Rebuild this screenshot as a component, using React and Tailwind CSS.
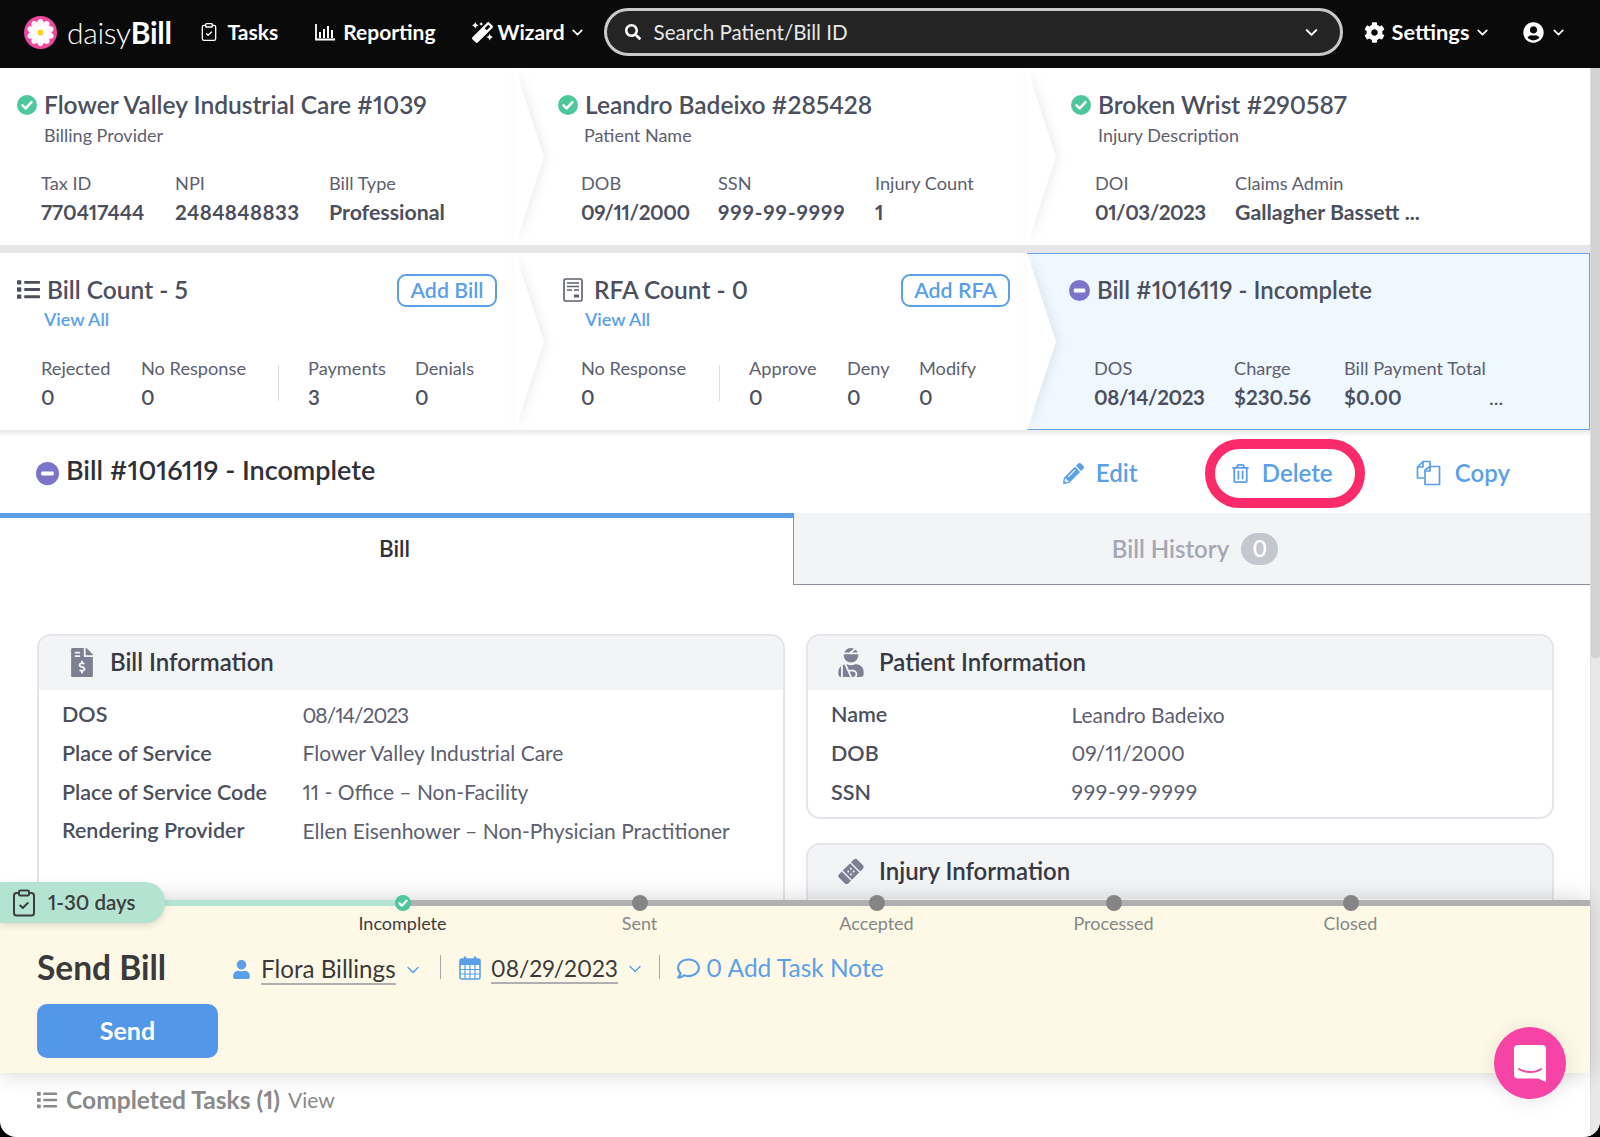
import React from "react";
import { FaCog, FaUserCircle, FaList, FaPencilAlt, FaUser, FaMagic, FaFileInvoiceDollar, FaUserInjured, FaBandAid, FaRegTrashAlt, FaRegComment, FaSearch } from "react-icons/fa";
import { ClipboardCheck, ChevronDown } from "lucide-react";

function CheckDot({ size = 20 }) {
  return (
    <svg width={size} height={size} viewBox="0 0 20 20" className="shrink-0">
      <circle cx="10" cy="10" r="10" fill="#4fc79d" />
      <path d="M5.5 10.3l3.1 3.1 5.9-6.2" fill="none" stroke="#fff" strokeWidth="2.6" strokeLinecap="round" strokeLinejoin="round" />
    </svg>
  );
}
function MinusDot({ size = 21 }) {
  return (
    <svg width={size} height={size} viewBox="0 0 20 20" className="shrink-0">
      <circle cx="10" cy="10" r="10" fill="#7b74c9" />
      <rect x="4.5" y="8.2" width="11" height="3.6" rx="1.2" fill="#fff" />
    </svg>
  );
}
function Flower() {
  const petals = [0, 36, 72, 108, 144, 180, 216, 252, 288, 324];
  return (
    <svg width="33" height="33" viewBox="0 0 33 33" className="shrink-0">
      <circle cx="16.5" cy="16.5" r="16.5" fill="#f0479f" />
      {petals.map((a) => (
        <ellipse key={a} cx="16.5" cy="8.6" rx="3.6" ry="5.8" fill="#fff" fillOpacity="0.95" transform={`rotate(${a} 16.5 16.5)`} />
      ))}
      <circle cx="16.5" cy="16.5" r="3" fill="#ffd21f" />
    </svg>
  );
}
function Bars() {
  return (
    <svg width="20" height="17" viewBox="0 0 20 17" className="shrink-0">
      <path d="M1 0v15.5h19" fill="none" stroke="#fff" strokeWidth="1.8" />
      <path d="M5 8v6M9 5v9M13 2v12M17 6v8" stroke="#fff" strokeWidth="2" />
    </svg>
  );
}
function RfaIcon() {
  return (
    <svg width="20" height="24" viewBox="0 0 20 24" className="shrink-0">
      <rect x="1" y="1" width="18" height="22" rx="1.5" fill="none" stroke="#5c5f6c" strokeWidth="1.6" />
      <path d="M4 5h12M4 8.5h12M4 12h5M11 12h5" stroke="#5c5f6c" strokeWidth="1.5" />
      <path d="M11 18h5" stroke="#5c5f6c" strokeWidth="3" />
    </svg>
  );
}
function CopyIcon() {
  return (
    <svg width="25" height="26" viewBox="0 0 25 26" fill="none" stroke="#5a9fe8" strokeWidth="1.7" strokeLinejoin="round" className="shrink-0">
      <path d="M8 18H1.5V7L7 1.5h7V8" />
      <path d="M7 1.5V7H1.5" />
      <path d="M9 24.5V10l5-3.5h9.5v18z" />
      <path d="M14 6.5V11H9" />
    </svg>
  );
}
function CalendarIcon() {
  return (
    <svg width="22" height="24" viewBox="0 0 22 24" className="shrink-0">
      <rect x="1" y="3" width="20" height="20" rx="2" fill="#fff" stroke="#5a9fe8" strokeWidth="1.6" />
      <rect x="1" y="3" width="20" height="6" fill="#5a9fe8" />
      <path d="M6 0.5v5M16 0.5v5" stroke="#5a9fe8" strokeWidth="2.4" />
      <path d="M1 13.5h20M1 18h20M6 9v14M11 9v14M16 9v14" stroke="#5a9fe8" strokeWidth="1.2" />
    </svg>
  );
}
function Stat({ label, value, w, bold = false, vc = "text-[20.5px]" }) {
  return (
    <div className={w}>
      <div className="text-[18.2px] leading-[22px] text-[#5d6070] whitespace-nowrap">{label}</div>
      <div className={`mt-[6px] leading-[24px] text-[#4c4f5e] whitespace-nowrap ${vc} ${bold ? "font-bold" : "font-semibold"}`}>{value}</div>
    </div>
  );
}
function Arrow() {
  return (
    <svg viewBox="0 0 29 177" preserveAspectRatio="none" className="absolute left-full top-0 z-10 h-full w-[29px] drop-shadow-[3px_0_5px_rgba(0,0,0,0.07)]">
      <polygon points="0,0 29,88.5 0,177" fill="#fff" />
    </svg>
  );
}
function Cell({ w, children, arrow, z, active }) {
  return (
    <div className={`relative ${w} ${z} ${active ? "bg-[#eff7ff] border border-[#6aa7ea] border-l-0" : "bg-white"}`}>
      {children}
      {arrow && <Arrow />}
    </div>
  );
}
function TitleLine({ icon, title, pl, gap = "gap-[7px]", size = "text-[24.5px]" }) {
  return (
    <div className={`flex items-center ${gap} ${pl}`}>
      {icon}
      <span className={`${size} leading-[30px] font-semibold text-[#4c4f5e] whitespace-nowrap`}>{title}</span>
    </div>
  );
}
function Card({ icon, title, rows, h, mt = "" }) {
  return (
    <div className={`${h} ${mt} rounded-[14px] border-2 border-[#e4e5ec] bg-white overflow-hidden`}>
      <div className="h-[54px] bg-[#f3f4f6] flex items-center pl-[30px] gap-[15px] pb-[2px]">
        <span className="w-[26px] flex justify-center text-[#7d8092] text-[29px]">{icon}</span>
        <span className="text-[24px] font-semibold text-[#363944]">{title}</span>
      </div>
      <div className="pt-[5px] pl-[23px]">
        {rows.map(([k, v, c = ""]) => (
          <div key={k} className="flex h-[38.7px] items-center">
            <span className="w-[240.5px] text-[21.5px] font-semibold text-[#4c4f5e]">{k}</span>
            <span className={`text-[21px] text-[#5d6070] ${c}`}>{v}</span>
          </div>
        ))}
      </div>
    </div>
  );
}
function Step({ name, done }) {
  return (
    <div className="w-[237px] flex flex-col items-center">
      {done ? <CheckDot size={16} /> : <div className="h-4 w-4 rounded-full bg-[#858585]" />}
      <div className={`mt-[1px] text-[18px] leading-[22px] ${done ? "text-[#3d3d3d]" : "text-[#868686]"}`}>{name}</div>
    </div>
  );
}
const AddBtn = ({ children, w }) => (
  <span className={`${w} mt-[2px] h-[33px] flex items-center justify-center rounded-[9px] border-2 border-[#5a9fe8] text-[21.3px] font-semibold text-[#5a9fe8] bg-white whitespace-nowrap`}>{children}</span>
);

export default function App() {
  return (
    <div className="w-[1600px] h-[1137px] bg-black font-[Lato,sans-serif] proportional-nums">
      <div className="relative w-full h-full bg-white rounded-b-[16px] overflow-hidden flex flex-col">
        <header className="h-[68px] shrink-0 bg-[#0a0a0a] flex items-center text-white font-bold text-[21px] pl-[24px] pb-[4px]">
          <Flower />
          <span className="ml-[10px] text-[30px] font-light tracking-[-0.3px]">daisy<span className="font-bold">Bill</span></span>
          <ClipboardCheck size={20} strokeWidth={1.6} className="ml-[27px]" />
          <span className="ml-[9px]">Tasks</span>
          <span className="ml-[37px]"><Bars /></span>
          <span className="ml-[8px]">Reporting</span>
          <FaMagic size={21} className="ml-[36px]" />
          <span className="ml-[5px]">Wizard</span>
          <ChevronDown size={17} strokeWidth={2.4} className="ml-[4px]" />
          <div className="ml-[18px] w-[739px] h-[48px] rounded-full border-[3px] border-[#c9c9c9] bg-[#242424] flex items-center pl-[18px] pr-[19px] font-normal">
            <FaSearch size={16} />
            <span className="ml-[13px] text-[20.6px] text-[#e8e8e8]">Search Patient/Bill ID</span>
            <ChevronDown size={19} strokeWidth={2.6} className="ml-auto" />
          </div>
          <FaCog size={21} className="ml-[21px]" />
          <span className="ml-[7px] text-[21.8px]">Settings</span>
          <ChevronDown size={17} strokeWidth={2.4} className="ml-[5px]" />
          <FaUserCircle size={21} className="ml-[32px]" />
          <ChevronDown size={17} strokeWidth={2.4} className="ml-[6px]" />
        </header>

        <div className="flex-1 min-h-0 flex">
          <div className="w-[1590px] flex flex-col min-h-0">
            <div className="flex-1 min-h-0 overflow-hidden">
              <div className="flex h-[177px]">
                <Cell w="w-[515px]" z="z-30" arrow>
                  <div className="pt-[22px]"><TitleLine pl="pl-[17px]" icon={<CheckDot />} title="Flower Valley Industrial Care #1039" /></div>
                  <div className="pl-[44px] mt-[4px] text-[18px] leading-[22px] text-[#5d6070]">Billing Provider</div>
                  <div className="flex pl-[41px] mt-[26px]">
                    <Stat w="w-[134px]" label="Tax ID" value="770417444" bold />
                    <Stat w="w-[154px]" label="NPI" value="2484848833" bold vc="text-[20.5px] tracking-[0.4px]" />
                    <Stat w="" label="Bill Type" value="Professional" bold vc="text-[21.3px]" />
                  </div>
                </Cell>
                <Cell w="w-[512px]" z="z-20" arrow>
                  <div className="pt-[22px]"><TitleLine pl="pl-[43px]" icon={<CheckDot />} title="Leandro Badeixo #285428" /></div>
                  <div className="pl-[69px] mt-[4px] text-[18px] leading-[22px] text-[#5d6070]">Patient Name</div>
                  <div className="flex pl-[66px] mt-[26px]">
                    <Stat w="w-[137px]" label="DOB" value="09/11/2000" bold vc="text-[20.5px] tracking-[-0.4px]" />
                    <Stat w="w-[157px]" label="SSN" value="999-99-9999" bold vc="text-[20.5px] tracking-[0.9px]" />
                    <Stat w="" label="Injury Count" value="1" bold />
                  </div>
                </Cell>
                <Cell w="w-[563px]" z="z-10">
                  <div className="pt-[22px]"><TitleLine pl="pl-[44px]" icon={<CheckDot />} title="Broken Wrist #290587" /></div>
                  <div className="pl-[71px] mt-[4px] text-[18px] leading-[22px] text-[#5d6070]">Injury Description</div>
                  <div className="flex pl-[68px] mt-[26px]">
                    <Stat w="w-[140px]" label="DOI" value="01/03/2023" bold vc="text-[20.5px] tracking-[-0.5px]" />
                    <Stat w="" label="Claims Admin" value="Gallagher Bassett ..." bold vc="text-[21.3px]" />
                  </div>
                </Cell>
              </div>
              <div className="h-[8px] bg-[#e6e6e8]" />
              <div className="flex h-[177px]">
                <Cell w="w-[515px]" z="z-30" arrow>
                  <div className="flex items-center pt-[19px] pr-[18px]">
                    <TitleLine pl="pl-[17px]" icon={<FaList size={23} className="text-[#4c4f5e]" />} title="Bill Count - 5" />
                    <span className="ml-auto"><AddBtn w="w-[100px]">Add Bill</AddBtn></span>
                  </div>
                  <div className="pl-[44px] mt-[1px] text-[18px] leading-[22px] font-semibold text-[#5a9fe8]">View All</div>
                  <div className="flex pl-[41px] mt-[27px]">
                    <Stat w="w-[100px]" label="Rejected" value="0" />
                    <Stat w="w-[137px]" label="No Response" value="0" />
                    <div className="h-[36px] mt-[8px] border-l border-[#dcdde2] mr-[29px]" />
                    <Stat w="w-[107px]" label="Payments" value="3" />
                    <Stat w="" label="Denials" value="0" />
                  </div>
                </Cell>
                <Cell w="w-[512px]" z="z-20" arrow>
                  <div className="flex items-center pt-[19px] pr-[17px]">
                    <TitleLine pl="pl-[48px]" gap="gap-[11px]" icon={<RfaIcon />} title="RFA Count - 0" />
                    <span className="ml-auto"><AddBtn w="w-[109px]">Add RFA</AddBtn></span>
                  </div>
                  <div className="pl-[70px] mt-[1px] text-[18px] leading-[22px] font-semibold text-[#5a9fe8]">View All</div>
                  <div className="flex pl-[66px] mt-[27px]">
                    <Stat w="w-[138px]" label="No Response" value="0" />
                    <div className="h-[36px] mt-[8px] border-l border-[#dcdde2] mr-[29px]" />
                    <Stat w="w-[98px]" label="Approve" value="0" />
                    <Stat w="w-[72px]" label="Deny" value="0" />
                    <Stat w="" label="Modify" value="0" />
                  </div>
                </Cell>
                <Cell w="w-[563px]" z="z-10" active>
                  <div className="pt-[21px]"><TitleLine pl="pl-[42px]" size="text-[24px]" icon={<MinusDot />} title="Bill #1016119 - Incomplete" /></div>
                  <div className="flex pl-[67px] mt-[52px]">
                    <Stat w="w-[140px]" label="DOS" value="08/14/2023" bold vc="text-[20.5px] tracking-[-0.4px]" />
                    <Stat w="w-[110px]" label="Charge" value="$230.56" bold />
                    <Stat w="w-[145px]" label="Bill Payment Total" value="$0.00" bold />
                    <span className="self-end text-[20px] leading-[24px] text-[#4c4f5e]">...</span>
                  </div>
                </Cell>
              </div>
              <div className="h-[7px] bg-gradient-to-b from-[#e8e8ea] to-white" />

              <div className="h-[76px] flex items-center pl-[36px] pb-[4px]">
                <MinusDot size={23} />
                <span className="ml-[7px] mb-[6px] text-[27px] font-semibold text-[#2f3139]">Bill #1016119 - Incomplete</span>
                <div className="ml-auto relative h-[69px] flex items-center text-[24px] font-semibold text-[#5a9fe8] pr-[80px]">
                  <FaPencilAlt size={21} />
                  <span className="ml-[12px] w-[85px]">Edit</span>
                  <div className="ml-[24px] w-[160px] h-[69px] rounded-[35px] border-[10px] border-[#fb2a6b] flex items-center pl-[16px]">
                    <FaRegTrashAlt size={19} />
                    <span className="ml-[12px]">Delete</span>
                  </div>
                  <span className="ml-[51px]"><CopyIcon /></span>
                  <span className="ml-[14px]">Copy</span>
                </div>
              </div>

              <div className="flex h-[72px]">
                <div className="w-[793px] border-t-[5px] border-[#5a9fe8] flex items-center justify-center pb-[6px] pr-[4px] text-[22.5px] font-semibold text-[#2f3139]">Bill</div>
                <div className="flex-1 bg-[#f3f4f6] border-l border-b border-[#8b8fa3] flex items-center justify-center gap-[12px] pl-[6px] text-[24px] font-semibold text-[#a5a7b2]">
                  Bill History
                  <span className="w-[37px] h-[32px] rounded-full bg-[#c5c7cf] text-white flex items-center justify-center text-[22px]">0</span>
                </div>
              </div>

              <div className="flex gap-[21px] pl-[37px] pt-[49px]">
                <Card
                  h="w-[748px] h-[400px]"
                  icon={<FaFileInvoiceDollar />}
                  title="Bill Information"
                  rows={[
                    ["DOS", "08/14/2023", "tracking-[-1px]"],
                    ["Place of Service", "Flower Valley Industrial Care"],
                    ["Place of Service Code", "11 - Office – Non-Facility"],
                    ["Rendering Provider", "Ellen Eisenhower – Non-Physician Practitioner"],
                  ]}
                />
                <div className="w-[748px]">
                  <Card
                    h="h-[185px]"
                    icon={<FaUserInjured />}
                    title="Patient Information"
                    rows={[
                      ["Name", "Leandro Badeixo"],
                      ["DOB", "09/11/2000"],
                      ["SSN", "999-99-9999", "tracking-[0.7px]"],
                    ]}
                  />
                  <Card h="h-[200px]" mt="mt-[24px]" icon={<FaBandAid className="-rotate-45" />} title="Injury Information" rows={[]} />
                </div>
              </div>
            </div>

            <div className="relative shrink-0 z-40 shadow-[0_0_22px_rgba(0,0,0,0.18)]">
              <div className="flex h-[6px]">
                <div className="w-[403px] bg-[#b5e3d1]" />
                <div className="flex-1 bg-[#b0b0b0]" />
              </div>
              <div className="absolute left-0 top-[-18px] w-[165px] h-[41px] rounded-r-[20px] bg-[#b5e3d1] flex items-center pl-[9px] gap-[9px] shadow-[0_3px_6px_rgba(0,0,0,0.12)] text-[20.5px] font-semibold text-[#3a3d3d]">
                <ClipboardCheck size={30} strokeWidth={1.6} />
                1-30 days
              </div>
              <div className="bg-[#fef9e7] h-[167px] flow-root">
                <div className="relative flex pl-[284px] -mt-[11px]">
                  <Step name="Incomplete" done />
                  <Step name="Sent" />
                  <Step name="Accepted" />
                  <Step name="Processed" />
                  <Step name="Closed" />
                </div>
                <div className="flex items-center pl-[37px] mt-[13px] h-[40px]">
                  <span className="w-[195px] text-[33.5px] font-bold text-[#3a3a3a]">Send Bill</span>
                  <FaUser size={19} className="mt-[4px] text-[#5a9fe8]" />
                  <span className="ml-[10px] mt-[5px] text-[24.2px] leading-[28px] text-[#3a3a3a] border-b-2 border-[#b0b0b0]">Flora Billings</span>
                  <ChevronDown size={20} strokeWidth={1.7} className="ml-[7px] mt-[5px] text-[#5a9fe8]" />
                  <div className="ml-[17px] h-[24px] border-l border-[#a9a9a9]" />
                  <span className="ml-[18px] mt-[2px]"><CalendarIcon /></span>
                  <span className="ml-[10px] mt-[4px] text-[22.8px] leading-[28px] text-[#3a3a3a] border-b-2 border-[#b0b0b0]">08/29/2023</span>
                  <ChevronDown size={20} strokeWidth={1.7} className="ml-[7px] mt-[4px] text-[#5a9fe8]" />
                  <div className="ml-[14px] h-[24px] border-l border-[#a9a9a9]" />
                  <FaRegComment size={23} className="ml-[17px] mt-[2px] text-[#5a9fe8]" />
                  <span className="ml-[6px] mt-[2px] text-[24.5px] text-[#5a9fe8]">0 Add Task Note</span>
                </div>
                <div className="ml-[37px] mt-[17px] w-[181px] h-[54px] rounded-[10px] bg-[#5398e8] text-white flex items-center justify-center text-[25px] font-bold">Send</div>
              </div>
            </div>

            <div className="h-[64px] shrink-0 flex items-center pl-[37px] pb-[10px] text-[#8a8a8a]">
              <FaList size={20} />
              <span className="ml-[9px] text-[24.6px] font-bold">Completed Tasks (1)</span>
              <span className="ml-[8px] text-[21px]">View</span>
            </div>
          </div>

          <div className="w-[10px] bg-[#e8e8e8] border-l border-[#dedede]">
            <div className="h-[590px] bg-[#d2d2d2] rounded-b-[3px]" />
          </div>
        </div>

        <div className="absolute left-[1494px] top-[1027px] z-50 w-[72px] h-[72px] rounded-full bg-[#f544a6] flex items-center justify-center shadow-[0_2px_20px_rgba(0,0,0,0.1)]">
          <svg width="32" height="37" viewBox="0 0 32 37">
            <path d="M4 0h24a4 4 0 0 1 4 4v33l-8-3.5H4a4 4 0 0 1-4-4V4a4 4 0 0 1 4-4z" fill="#fff" />
            <path d="M5 24c6 4 16 4 22 0" fill="none" stroke="#f544a6" strokeWidth="2" strokeLinecap="round" />
          </svg>
        </div>
      </div>
    </div>
  );
}
